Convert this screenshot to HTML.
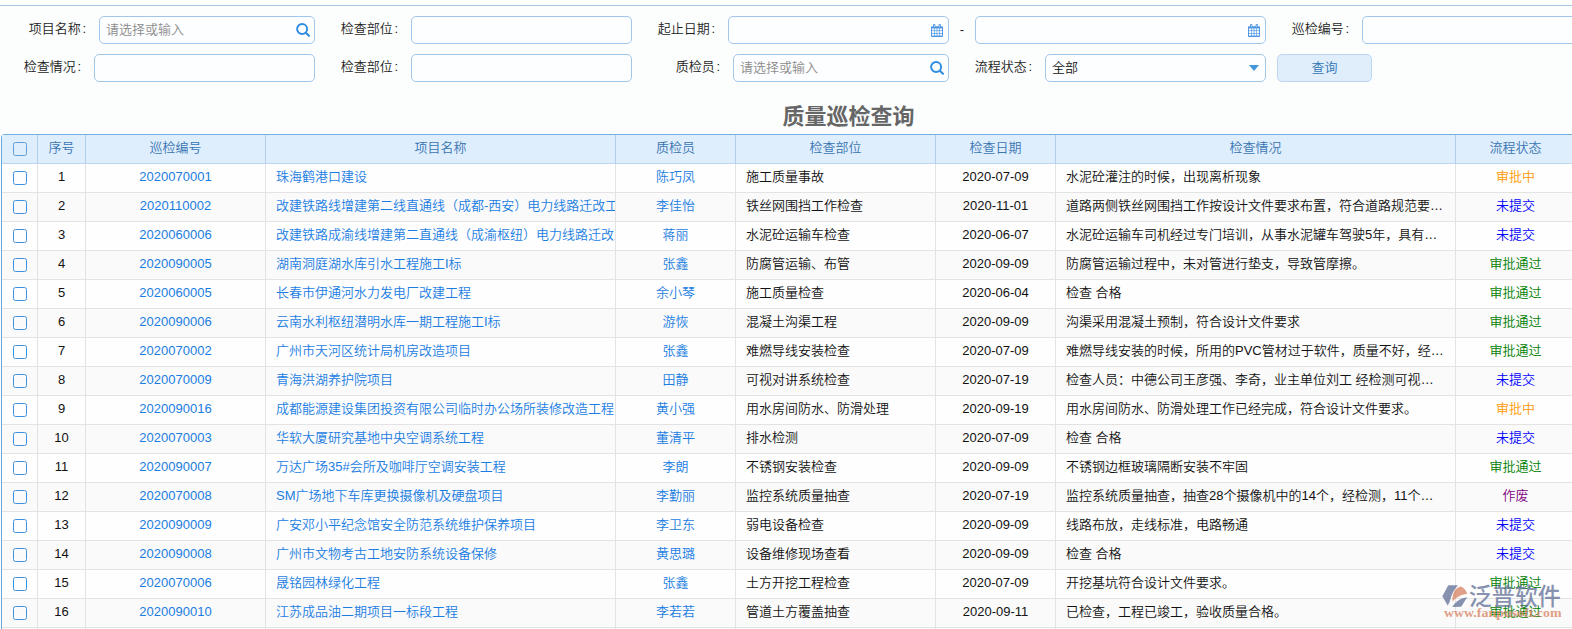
<!DOCTYPE html>
<html lang="zh-CN">
<head>
<meta charset="utf-8">
<title>质量巡检查询</title>
<style>
html,body{margin:0;padding:0;}
body{width:1572px;height:629px;overflow:hidden;background:#fcfefe;position:relative;
 font-family:"Liberation Sans","Noto Sans CJK SC",sans-serif;font-size:13px;color:#111;font-weight:350;}
.topline{position:absolute;left:0;top:5px;width:1572px;height:1px;background:#a8c8e6;}
.lb{position:absolute;height:28px;line-height:26px;white-space:nowrap;text-align:right;width:90px;color:#1c1c1c;}
.lb i{font-style:normal;margin-left:1.5px;}
.inp{position:absolute;height:28px;box-sizing:border-box;border:1px solid #a2c6e9;border-radius:5px;background:#fdfeff;}
.inp .ph{position:absolute;left:6px;top:0;line-height:25px;color:#8c8c8c;white-space:nowrap;}
.inp .val{position:absolute;left:6px;top:0;line-height:25px;color:#111;white-space:nowrap;}
.ic-s{position:absolute;right:3px;top:5px;}
.ic-c{position:absolute;right:5px;top:7px;}
.arrow{position:absolute;right:6px;top:10px;width:0;height:0;border-left:5px solid transparent;border-right:5px solid transparent;border-top:6px solid #4496dc;}
.btn{position:absolute;left:1277px;top:54px;width:95px;height:28px;box-sizing:border-box;border:1px solid #bcd7f2;border-radius:5px;background:#e0eefb;color:#2f74b5;text-align:center;line-height:26px;}
.title{position:absolute;left:0;top:102px;width:1697px;text-align:center;font-size:22px;font-weight:bold;color:#666;line-height:30px;white-space:nowrap;}
.grid{position:absolute;left:1px;top:134px;width:1600px;border-left:1px solid #66a7de;border-top:1px solid #74b0e3;border-top-left-radius:4px;}
table{border-collapse:separate;border-spacing:0;table-layout:fixed;width:1574px;}
th,td{box-sizing:border-box;height:29px;padding:0 0 2px 0;border-right:1px solid #e3e3e3;border-bottom:1px solid #e3e3e3;font-weight:350;font-size:13px;white-space:nowrap;overflow:hidden;text-align:center;line-height:26px;}
th{background:#dfeefc;color:#3874b2;border-right:1px solid #b0cfec;border-bottom:1px solid #bdd6ee;}
tr.o td{background:#fefefe;}
tr.e td{background:#fafafa;}
td.l{text-align:left;padding:0 10px 2px 10px;}
td.el{text-overflow:ellipsis;}
a{color:#1b7de2;text-decoration:none;}
.cb{display:inline-block;width:14px;height:14px;box-sizing:border-box;border:1px solid #3c92de;border-radius:2.5px;background:transparent;vertical-align:middle;margin-top:0px;}
th .cb{border-color:#63a0d9;background:transparent;}
.s1{color:#ff9900;}.s2{color:#0000ff;}.s3{color:#008000;}.s4{color:#800080;}
.wm{position:absolute;left:1438px;top:578px;width:134px;height:50px;opacity:0.75;}
</style>
</head>
<body>
<div class="topline"></div>
<div class="lb" style="left:-4px;top:16px;">项目名称<i>:</i></div>
<div class="inp" style="left:99px;top:16px;width:216px;"><span class="ph">请选择或输入</span><svg class="ic-s" width="16" height="16" viewBox="0 0 16 16"><circle cx="7.1" cy="7" r="5" fill="none" stroke="#2f8de0" stroke-width="1.9"/><path d="M10.8 10.7 L14 13.7" stroke="#2f8de0" stroke-width="2.1" stroke-linecap="round"/></svg></div>
<div class="lb" style="left:308px;top:16px;">检查部位<i>:</i></div>
<div class="inp" style="left:411px;top:16px;width:221px;"></div>
<div class="lb" style="left:625px;top:16px;">起止日期<i>:</i></div>
<div class="inp" style="left:728px;top:16px;width:221px;"><svg class="ic-c" width="12" height="13" viewBox="0 0 12 13"><path d="M0 3.2 Q0 2.2 1 2.2 H11 Q12 2.2 12 3.2 V12 Q12 13 11 13 H1 Q0 13 0 12 Z" fill="#4d96e3"/><rect x="2" y="0" width="2.4" height="3.8" rx="1.1" fill="#4d96e3"/><rect x="7.6" y="0" width="2.4" height="3.8" rx="1.1" fill="#4d96e3"/><rect x="2.9" y="0.9" width="0.7" height="2.2" fill="#e6f0fb"/><rect x="8.5" y="0.9" width="0.7" height="2.2" fill="#e6f0fb"/><g fill="#f7fbff"><rect x="0.95" y="4.45" width="2.05" height="1.95"/><rect x="3.62" y="4.45" width="2.05" height="1.95"/><rect x="6.33" y="4.45" width="2.05" height="1.95"/><rect x="9.0" y="4.45" width="2.05" height="1.95"/><rect x="0.95" y="7.05" width="2.05" height="1.95"/><rect x="3.62" y="7.05" width="2.05" height="1.95"/><rect x="6.33" y="7.05" width="2.05" height="1.95"/><rect x="9.0" y="7.05" width="2.05" height="1.95"/><rect x="0.95" y="9.65" width="2.05" height="1.95"/><rect x="3.62" y="9.65" width="2.05" height="1.95"/><rect x="6.33" y="9.65" width="2.05" height="1.95"/><rect x="9.0" y="9.65" width="2.05" height="1.95"/></g></svg></div>
<div class="lb" style="left:955px;top:17px;width:14px;text-align:center;">-</div>
<div class="inp" style="left:975px;top:16px;width:291px;"><svg class="ic-c" width="12" height="13" viewBox="0 0 12 13"><path d="M0 3.2 Q0 2.2 1 2.2 H11 Q12 2.2 12 3.2 V12 Q12 13 11 13 H1 Q0 13 0 12 Z" fill="#4d96e3"/><rect x="2" y="0" width="2.4" height="3.8" rx="1.1" fill="#4d96e3"/><rect x="7.6" y="0" width="2.4" height="3.8" rx="1.1" fill="#4d96e3"/><rect x="2.9" y="0.9" width="0.7" height="2.2" fill="#e6f0fb"/><rect x="8.5" y="0.9" width="0.7" height="2.2" fill="#e6f0fb"/><g fill="#f7fbff"><rect x="0.95" y="4.45" width="2.05" height="1.95"/><rect x="3.62" y="4.45" width="2.05" height="1.95"/><rect x="6.33" y="4.45" width="2.05" height="1.95"/><rect x="9.0" y="4.45" width="2.05" height="1.95"/><rect x="0.95" y="7.05" width="2.05" height="1.95"/><rect x="3.62" y="7.05" width="2.05" height="1.95"/><rect x="6.33" y="7.05" width="2.05" height="1.95"/><rect x="9.0" y="7.05" width="2.05" height="1.95"/><rect x="0.95" y="9.65" width="2.05" height="1.95"/><rect x="3.62" y="9.65" width="2.05" height="1.95"/><rect x="6.33" y="9.65" width="2.05" height="1.95"/><rect x="9.0" y="9.65" width="2.05" height="1.95"/></g></svg></div>
<div class="lb" style="left:1259px;top:16px;">巡检编号<i>:</i></div>
<div class="inp" style="left:1362px;top:16px;width:221px;"></div>
<div class="lb" style="left:-9px;top:54px;">检查情况<i>:</i></div>
<div class="inp" style="left:94px;top:54px;width:221px;"></div>
<div class="lb" style="left:308px;top:54px;">检查部位<i>:</i></div>
<div class="inp" style="left:411px;top:54px;width:221px;"></div>
<div class="lb" style="left:630px;top:54px;">质检员<i>:</i></div>
<div class="inp" style="left:733px;top:54px;width:216px;"><span class="ph">请选择或输入</span><svg class="ic-s" width="16" height="16" viewBox="0 0 16 16"><circle cx="7.1" cy="7" r="5" fill="none" stroke="#2f8de0" stroke-width="1.9"/><path d="M10.8 10.7 L14 13.7" stroke="#2f8de0" stroke-width="2.1" stroke-linecap="round"/></svg></div>
<div class="lb" style="left:942px;top:54px;">流程状态<i>:</i></div>
<div class="inp" style="left:1045px;top:54px;width:221px;"><span class="val">全部</span><span class="arrow"></span></div>
<div class="btn">查询</div>
<div class="title">质量巡检查询</div>
<div class="grid"><table>
<colgroup><col style="width:36px"><col style="width:48px"><col style="width:180px"><col style="width:350px"><col style="width:120px"><col style="width:200px"><col style="width:120px"><col style="width:400px"><col style="width:120px"></colgroup>
<tr><th><span class="cb"></span></th><th>序号</th><th>巡检编号</th><th>项目名称</th><th>质检员</th><th>检查部位</th><th>检查日期</th><th>检查情况</th><th>流程状态</th></tr>
<tr class="o"><td><span class="cb"></span></td><td>1</td><td><a>2020070001</a></td><td class="l"><a>珠海鹤港口建设</a></td><td><a>陈巧凤</a></td><td class="l">施工质量事故</td><td>2020-07-09</td><td class="l el">水泥砼灌注的时候，出现离析现象</td><td class="s1">审批中</td></tr>
<tr class="e"><td><span class="cb"></span></td><td>2</td><td><a>2020110002</a></td><td class="l"><a>改建铁路线增建第二线直通线（成都-西安）电力线路迁改工程</a></td><td><a>李佳怡</a></td><td class="l">铁丝网围挡工作检查</td><td>2020-11-01</td><td class="l el">道路两侧铁丝网围挡工作按设计文件要求布置，符合道路规范要求，验收合格</td><td class="s2">未提交</td></tr>
<tr class="o"><td><span class="cb"></span></td><td>3</td><td><a>2020060006</a></td><td class="l"><a>改建铁路成渝线增建第二直通线（成渝枢纽）电力线路迁改工程</a></td><td><a>蒋丽</a></td><td class="l">水泥砼运输车检查</td><td>2020-06-07</td><td class="l el">水泥砼运输车司机经过专门培训，从事水泥罐车驾驶5年，具有丰富经验</td><td class="s2">未提交</td></tr>
<tr class="e"><td><span class="cb"></span></td><td>4</td><td><a>2020090005</a></td><td class="l"><a>湖南洞庭湖水库引水工程施工I标</a></td><td><a>张鑫</a></td><td class="l">防腐管运输、布管</td><td>2020-09-09</td><td class="l el">防腐管运输过程中，未对管进行垫支，导致管摩擦。</td><td class="s3">审批通过</td></tr>
<tr class="o"><td><span class="cb"></span></td><td>5</td><td><a>2020060005</a></td><td class="l"><a>长春市伊通河水力发电厂改建工程</a></td><td><a>余小琴</a></td><td class="l">施工质量检查</td><td>2020-06-04</td><td class="l el">检查 合格</td><td class="s3">审批通过</td></tr>
<tr class="e"><td><span class="cb"></span></td><td>6</td><td><a>2020090006</a></td><td class="l"><a>云南水利枢纽潜明水库一期工程施工I标</a></td><td><a>游恢</a></td><td class="l">混凝土沟渠工程</td><td>2020-09-09</td><td class="l el">沟渠采用混凝土预制，符合设计文件要求</td><td class="s3">审批通过</td></tr>
<tr class="o"><td><span class="cb"></span></td><td>7</td><td><a>2020070002</a></td><td class="l"><a>广州市天河区统计局机房改造项目</a></td><td><a>张鑫</a></td><td class="l">难燃导线安装检查</td><td>2020-07-09</td><td class="l el">难燃导线安装的时候，所用的PVC管材过于软件，质量不好，经检查不合格</td><td class="s3">审批通过</td></tr>
<tr class="e"><td><span class="cb"></span></td><td>8</td><td><a>2020070009</a></td><td class="l"><a>青海洪湖养护院项目</a></td><td><a>田静</a></td><td class="l">可视对讲系统检查</td><td>2020-07-19</td><td class="l el">检查人员：中德公司王彦强、李奇，业主单位刘工 经检测可视对讲系统合格</td><td class="s2">未提交</td></tr>
<tr class="o"><td><span class="cb"></span></td><td>9</td><td><a>2020090016</a></td><td class="l"><a>成都能源建设集团投资有限公司临时办公场所装修改造工程</a></td><td><a>黄小强</a></td><td class="l">用水房间防水、防滑处理</td><td>2020-09-19</td><td class="l el">用水房间防水、防滑处理工作已经完成，符合设计文件要求。</td><td class="s1">审批中</td></tr>
<tr class="e"><td><span class="cb"></span></td><td>10</td><td><a>2020070003</a></td><td class="l"><a>华软大厦研究基地中央空调系统工程</a></td><td><a>董清平</a></td><td class="l">排水检测</td><td>2020-07-09</td><td class="l el">检查 合格</td><td class="s2">未提交</td></tr>
<tr class="o"><td><span class="cb"></span></td><td>11</td><td><a>2020090007</a></td><td class="l"><a>万达广场35#会所及咖啡厅空调安装工程</a></td><td><a>李朗</a></td><td class="l">不锈钢安装检查</td><td>2020-09-09</td><td class="l el">不锈钢边框玻璃隔断安装不牢固</td><td class="s3">审批通过</td></tr>
<tr class="e"><td><span class="cb"></span></td><td>12</td><td><a>2020070008</a></td><td class="l"><a>SM广场地下车库更换摄像机及硬盘项目</a></td><td><a>李勤丽</a></td><td class="l">监控系统质量抽查</td><td>2020-07-19</td><td class="l el">监控系统质量抽查，抽查28个摄像机中的14个，经检测，11个合格，3个不合格</td><td class="s4">作废</td></tr>
<tr class="o"><td><span class="cb"></span></td><td>13</td><td><a>2020090009</a></td><td class="l"><a>广安邓小平纪念馆安全防范系统维护保养项目</a></td><td><a>李卫东</a></td><td class="l">弱电设备检查</td><td>2020-09-09</td><td class="l el">线路布放，走线标准，电路畅通</td><td class="s2">未提交</td></tr>
<tr class="e"><td><span class="cb"></span></td><td>14</td><td><a>2020090008</a></td><td class="l"><a>广州市文物考古工地安防系统设备保修</a></td><td><a>黄思璐</a></td><td class="l">设备维修现场查看</td><td>2020-09-09</td><td class="l el">检查 合格</td><td class="s2">未提交</td></tr>
<tr class="o"><td><span class="cb"></span></td><td>15</td><td><a>2020070006</a></td><td class="l"><a>晟铭园林绿化工程</a></td><td><a>张鑫</a></td><td class="l">土方开挖工程检查</td><td>2020-07-09</td><td class="l el">开挖基坑符合设计文件要求。</td><td class="s3">审批通过</td></tr>
<tr class="e"><td><span class="cb"></span></td><td>16</td><td><a>2020090010</a></td><td class="l"><a>江苏成品油二期项目一标段工程</a></td><td><a>李若若</a></td><td class="l">管道土方覆盖抽查</td><td>2020-09-11</td><td class="l el">已检查，工程已竣工，验收质量合格。</td><td class="s3">审批通过</td></tr>
<tr class="o"><td></td><td></td><td></td><td></td><td></td><td></td><td></td><td></td><td></td></tr>
</table></div>
<svg class="wm" viewBox="0 0 134 50" width="134" height="50">
<path d="M10.3 7.2 L20 7.2 Q14 13.5 11.6 24 L9.7 27.6 L4.3 18.3 Z" fill="#5f6f96"/>
<path d="M14.6 23.6 C13.8 14.5 17.8 9.6 23.2 8.6 C26.5 10.4 28.5 13 29.2 16 C23 16.6 18 19.4 14.6 23.6 Z" fill="#d68060"/>
<path d="M14.3 28.9 L23.2 28.7 L29.2 19.2 C23 20 18 23 14.3 28.9 Z" fill="#5f6f96"/>
<text x="30.8" y="26.6" font-family="'Liberation Sans','Noto Sans CJK SC',sans-serif" font-size="23.5" font-weight="500" fill="#5f6f96" textLength="92" lengthAdjust="spacingAndGlyphs">泛普软件</text>
<text x="6" y="39" font-family="'Liberation Serif',serif" font-size="12" font-weight="bold" fill="#d68060" textLength="117.5" lengthAdjust="spacingAndGlyphs">www.fanpusoft.com</text>
</svg>
</body>
</html>
